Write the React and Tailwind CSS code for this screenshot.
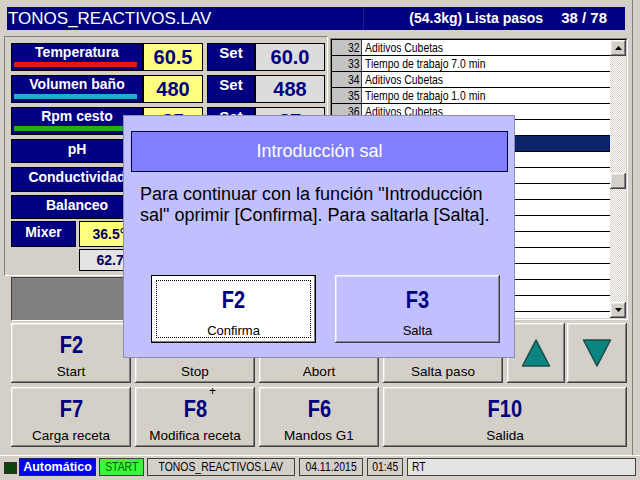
import React from 'react'

const raised =
  'shadow-[inset_-1px_-1px_#404040,inset_1px_1px_#ffffff,inset_-2px_-2px_#808080,inset_2px_2px_#e4e2dc]'
const raisedLav =
  'shadow-[inset_-1px_-1px_#404040,inset_1px_1px_#ffffff,inset_-2px_-2px_#8080a0,inset_2px_2px_#e0e0ff]'
const navyBox = 'bg-[#000080] border border-black'

// only the steps above the dialog are readable; the rest stay blank rows
const steps = [
  [32, 'Aditivos Cubetas'],
  [33, 'Tiempo de trabajo 7.0 min'],
  [34, 'Aditivos Cubetas'],
  [35, 'Tiempo de trabajo 1.0 min'],
  [36, 'Aditivos Cubetas'],
  [37, ''],
  [38, ''],
  [39, ''],
  [40, ''],
  [41, ''],
  [42, ''],
  [43, ''],
  [44, ''],
  [45, ''],
  [46, ''],
  [47, ''],
  [48, ''],
]

function MeasureRow({ label, bar, value, setValue }) {
  return (
    <div className="flex h-[28px]">
      <div className={`w-[132px] flex flex-col items-center ${navyBox}`}>
        <span className="text-[14px] leading-[16px] font-bold text-white">{label}</span>
        <div className={`mt-auto mb-[3px] ml-[2px] mr-[5px] h-[5px] self-stretch ${bar}`} />
      </div>
      <div className="w-[60px] flex items-center justify-center bg-[#ffff80] border border-black text-[20px] font-bold text-[#000080]">
        {value}
      </div>
      <div className={`ml-[4px] w-[48px] flex justify-center ${navyBox}`}>
        <span className="text-[15px] leading-[17px] font-bold text-white">Set</span>
      </div>
      <div className="w-[70px] flex items-center justify-center bg-[#dcdcdc] border border-black text-[20px] font-bold text-[#000080]">
        {setValue}
      </div>
    </div>
  )
}

function LabelRow({ label, h, mt }) {
  return (
    <div className={`flex ${h} ${mt}`}>
      <div className={`w-[132px] flex justify-center pt-[1px] ${navyBox}`}>
        <span className="text-[14px] leading-[16px] font-bold text-white whitespace-nowrap">{label}</span>
      </div>
      <div className="w-[60px] bg-[#ffff80] border border-black" />
    </div>
  )
}

function FKey({ k, label, w = 'w-[120px]', plus, ml = '' }) {
  return (
    <div className={`relative h-[60px] flex flex-col items-center bg-[#d4d0c8] ${raised} ${w} ${ml}`}>
      <span className="mt-[9px] inline-block scale-x-[0.87] text-[23px] leading-[26px] font-bold text-[#000080]">{k}</span>
      <span className="mt-[6px] text-[13.5px] leading-[16px] text-black">{label}</span>
      {plus && <span className="absolute left-[74px] top-[-2px] text-[12px] leading-[12px] text-black">+</span>}
    </div>
  )
}

function Arrow({ down }) {
  return (
    <svg width="30" height="30" viewBox="0 0 30 30" className={down ? 'rotate-180' : ''}>
      <path d="M15 2 L28.5 28 L1.5 28 Z" fill="#0a8582" stroke="#1c4c4c" strokeWidth="1.6" strokeLinejoin="round" />
    </svg>
  )
}

function Narrow({ children, origin = 'origin-center' }) {
  return <span className={`inline-block whitespace-nowrap scale-x-[0.8] ${origin}`}>{children}</span>
}

function ScrollBtn({ down }) {
  return (
    <div className={`h-[16px] flex items-center justify-center bg-[#d4d0c8] ${raised}`}>
      <svg width="7" height="4" viewBox="0 0 7 4" className={down ? 'rotate-180' : ''}>
        <path d="M3.5 0 L7 4 L0 4 Z" fill="#000" />
      </svg>
    </div>
  )
}

const checker = 'bg-[image:repeating-conic-gradient(#ffffff_0%_25%,#d4d0c8_0%_50%)] bg-[length:2px_2px]'

export default function App() {
  return (
    <div className="relative w-[640px] h-[480px] overflow-hidden bg-[#d4d0c8] font-['Liberation_Sans',Arial,sans-serif]">
      <div className="w-[633px] h-[455px] pt-[7px] border-r border-[#808080]">
        {/* title bar */}
        <div className="ml-[7px] w-[618px] h-[23px] flex bg-[#000080] text-white">
          <div className="w-[356px] pl-[1px] text-[17px] leading-[23px]">TONOS_REACTIVOS.LAV</div>
          <div className="flex-1 flex items-center justify-end pr-[18px] border-l border-[#1a1a9a]">
            <span className="text-[14px] font-bold">(54.3kg) Lista pasos</span>
            <span className="ml-[18px] text-[15px] font-bold">38 / 78</span>
          </div>
        </div>

        <div className="mt-[6px] flex">
          {/* left measures */}
          <div className="ml-[4px] w-[324px]">
            <div className="h-[240px] pl-[6px] pt-[6px] border border-t-[#808080] border-l-[#808080] border-b-white border-r-white">
              <MeasureRow label="Temperatura" bar="bg-[#e01818]" value="60.5" setValue="60.0" />
              <div className="mt-[4px]">
                <MeasureRow label="Volumen baño" bar="bg-[#18b4c4]" value="480" setValue="488" />
              </div>
              <div className="mt-[4px]">
                <MeasureRow label="Rpm cesto" bar="bg-[#18b418]" value="85" setValue="87" />
              </div>
              <LabelRow label="pH" h="h-[24px]" mt="mt-[4px]" />
              <LabelRow label="Conductividad" h="h-[25px]" mt="mt-[4px]" />
              <LabelRow label="Balanceo" h="h-[24px]" mt="mt-[3px]" />
              <div className="mt-[2px] flex h-[26px]">
                <div className={`w-[65px] flex justify-center pt-[2px] ${navyBox}`}>
                  <span className="text-[14px] leading-[16px] font-bold text-white">Mixer</span>
                </div>
                <div className="ml-[3px] w-[70px] flex items-center justify-center bg-[#ffff80] border border-black text-[14px] font-bold text-[#000060]">
                  36.5°C
                </div>
              </div>
              <div className="mt-[2px] ml-[68px] w-[70px] h-[22px] flex items-center justify-center bg-[#e4e4e4] border border-black text-[14px] font-bold text-[#000060]">
                62.7 l
              </div>
            </div>
            <div className="mt-[1px] ml-[7px] w-[317px] h-[44px] bg-[#808080] border border-t-[#404040] border-l-[#404040] border-b-white border-r-white" />
          </div>

          {/* steps list */}
          <div className="ml-[2px] mt-[2px] w-[298px] h-[282px] border border-t-[#808080] border-l-[#808080] border-b-white border-r-white">
            <div className="h-full flex border border-t-black border-l-black border-b-[#d4d0c8] border-r-[#d4d0c8]">
              <div className="flex-1 overflow-hidden bg-white">
                {steps.map(([n, text]) => {
                  const sel = n === 38
                  return (
                    <div key={n} className="flex h-[16px] border-b border-black">
                      <div className="w-[30px] pr-[2px] flex justify-end bg-[#c4c4c4] border-r border-[#404040] text-[13px] leading-[15px] text-black">
                        {text && <Narrow origin="origin-right">{n}</Narrow>}
                      </div>
                      <div className={`flex-1 pl-[3px] overflow-hidden text-[13px] leading-[15px] ${sel ? 'bg-[#0a246a] text-white' : 'bg-white text-black'}`}>
                        {text && <Narrow origin="origin-left">{text}</Narrow>}
                      </div>
                    </div>
                  )
                })}
              </div>
              <div className="w-[16px] flex flex-col">
                <ScrollBtn />
                <div className={`h-[117px] ${checker}`} />
                <div className={`h-[16px] bg-[#d4d0c8] ${raised}`} />
                <div className={`flex-1 ${checker}`} />
                <ScrollBtn down />
              </div>
            </div>
          </div>
        </div>

        {/* function keys */}
        <div className="mt-[2px] ml-[11px] flex">
          <FKey k="F2" label="Start" />
          <FKey k="F3" label="Stop" ml="ml-[4px]" />
          <FKey k="F4" label="Abort" ml="ml-[4px]" />
          <FKey k="F5" label="Salta paso" ml="ml-[4px]" />
          <div className={`ml-[4px] w-[58px] h-[60px] flex items-center justify-center ${raised}`}>
            <Arrow />
          </div>
          <div className={`ml-[2px] w-[60px] h-[60px] flex items-center justify-center ${raised}`}>
            <Arrow down />
          </div>
        </div>
        <div className="mt-[4px] ml-[11px] flex">
          <FKey k="F7" label="Carga receta" />
          <FKey k="F8" label="Modifica receta" ml="ml-[4px]" plus />
          <FKey k="F6" label="Mandos G1" ml="ml-[4px]" />
          <FKey k="F10" label="Salida" w="w-[244px]" ml="ml-[4px]" />
        </div>
      </div>
      <div className="h-[1px] bg-white" />

      {/* status bar */}
      <div className="mt-[2px] ml-[4px] flex h-[18px] text-[13px] leading-[16px]">
        <div className="mt-[4px] w-[13px] h-[12px] bg-[#0c440c] border border-[#303030]" />
        <div className="ml-[2px] w-[77px] flex justify-center bg-[#0000ff] border border-[#202060] text-[12.5px] font-bold text-white">
          Automático
        </div>
        <div className="ml-[3px] w-[45px] flex justify-center bg-[#38f838] border border-[#404040] text-[#006000]">
          <Narrow>START</Narrow>
        </div>
        <div className="ml-[3px] w-[148px] flex justify-center border border-[#404040] text-black">
          <Narrow>TONOS_REACTIVOS.LAV</Narrow>
        </div>
        <div className="ml-[4px] w-[64px] flex justify-center border border-[#404040] text-black">
          <Narrow>04.11.2015</Narrow>
        </div>
        <div className="ml-[4px] w-[36px] flex justify-center border border-[#404040] text-black">
          <Narrow>01:45</Narrow>
        </div>
        <div className="ml-[4px] w-[229px] pl-[4px] border border-[#404040] bg-[#e4e4e4] text-black">
          <Narrow origin="origin-left">RT</Narrow>
        </div>
      </div>

      {/* dialog */}
      <div className="absolute left-[123px] top-[115px] w-[392px] h-[243px] bg-[#c0c0ff] border border-[#8c8cb4]">
        <div className="ml-[7px] mt-[15px] w-[377px] h-[41px] flex items-center justify-center bg-[#8080ff] border border-[#000040] text-[18px] text-white">
          Introducción sal
        </div>
        <p className="ml-[16px] mt-[12px] text-[18px] leading-[21px] text-black">
          Para continuar con la función "Introducción
          <br />
          sal" oprimir [Confirma]. Para saltarla [Salta].
        </p>
        <div className="mt-[49px] ml-[27px] flex">
          <div className="relative w-[165px] h-[68px] flex flex-col items-center bg-white border border-black shadow-[inset_-1px_-1px_#808080]">
            <div className="absolute inset-[4px] border border-dotted border-black" />
            <span className="mt-[11px] inline-block scale-x-[0.87] text-[23px] leading-[26px] font-bold text-[#000080]">F2</span>
            <span className="mt-[10px] text-[13px] leading-[16px] text-black">Confirma</span>
          </div>
          <div className={`ml-[19px] w-[165px] h-[68px] flex flex-col items-center bg-[#c0c0ff] ${raisedLav}`}>
            <span className="mt-[12px] inline-block scale-x-[0.87] text-[23px] leading-[26px] font-bold text-[#000080]">F3</span>
            <span className="mt-[10px] text-[13px] leading-[16px] text-black">Salta</span>
          </div>
        </div>
      </div>
    </div>
  )
}
